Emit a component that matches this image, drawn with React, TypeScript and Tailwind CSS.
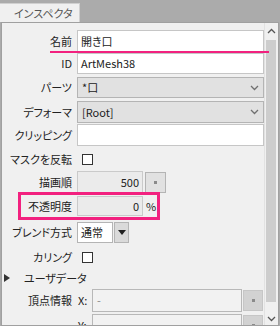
import React from 'react';

const Chevron = ({ up = false, className = '' }: { up?: boolean; className?: string }) => (
  <svg width="9" height="6" viewBox="0 0 9 6" className={className}>
    <polyline
      points={up ? '1,5 4.5,1.5 8,5' : '1,1 4.5,4.5 8,1'}
      fill="none"
      stroke="currentColor"
      strokeWidth="1.3"
    />
  </svg>
);

const Row = ({ className = '', children }: { className?: string; children: React.ReactNode }) => (
  <div className={`flex items-center shrink-0 ${className}`}>{children}</div>
);

const Label = ({ children }: { children: React.ReactNode }) => (
  <div className="w-[70px] shrink-0 text-right whitespace-nowrap">{children}</div>
);

const TextBox = ({ value }: { value: string }) => (
  <div className="ml-[5px] flex-1 h-full flex items-center bg-white border border-[#c6c6c6] pl-[3px]">{value}</div>
);

const Select = ({ value }: { value: string }) => (
  <div className="ml-[5px] flex-1 h-full flex items-center justify-between bg-[#e1e1e1] border border-[#b4b4b4] pl-[4px] pr-[4px]">
    <span>{value}</span>
    <Chevron className="text-[#707070]" />
  </div>
);

const Check = () => <div className="ml-[10px] w-[11px] h-[11px] bg-white border border-[#333]" />;

const DotButton = ({ className = '' }: { className?: string }) => (
  <div className={`flex items-center justify-center ${className}`}>
    <div className="w-[3px] h-[3px] bg-[#8a8a8a]" />
  </div>
);

export default function App() {
  return (
    <div className="relative w-[280px] h-[326px] overflow-hidden bg-[#ababab] font-['Noto_Sans_CJK_JP',sans-serif] text-[11px] leading-none text-[#222] [font-feature-settings:'palt']">
      {/* tab strip */}
      <div className="h-[22px] pt-[3px]">
        <div className="w-[80px] h-[19px] bg-[#f0f0f0] border-t border-r border-[#d0d0d0] pl-[14px] flex items-center text-[11px] text-[#555]">
          インスペクタ
        </div>
      </div>

      {/* inspector panel */}
      <div className="ml-[1px] w-[278px] h-[304px] flex border border-[#a0a0a0] bg-[#f0f0f0]">
        <div className="w-[262px] flex flex-col overflow-hidden">
          <Row className="h-[22px] mt-[7px]">
            <Label>名前</Label>
            <TextBox value="開き口" />
          </Row>
          <Row className="h-[21px] mt-[1px]">
            <Label>ID</Label>
            <TextBox value="ArtMesh38" />
          </Row>
          <Row className="h-[21px] mt-[3px]">
            <Label>パーツ</Label>
            <Select value="*口" />
          </Row>
          <Row className="h-[22px] mt-[3px]">
            <Label>デフォーマ</Label>
            <Select value="[Root]" />
          </Row>
          <Row className="h-[22px] mt-[1px]">
            <Label>クリッピング</Label>
            <TextBox value="" />
          </Row>
          <Row className="h-[20px] mt-[3px]">
            <Label>マスクを反転</Label>
            <Check />
          </Row>
          <Row className="h-[22px] mt-[2px]">
            <Label>描画順</Label>
            <div className="ml-[5px] w-[66px] h-full flex items-center justify-end pr-[3px] bg-[#ebebeb] border border-[#cacaca]">500</div>
            <DotButton className="ml-[2px] w-[21px] h-[21px] bg-[#e1e1e1] border border-[#b4b4b4]" />
          </Row>
          <Row className="h-[20px] mt-[3px]">
            <Label>不透明度</Label>
            <div className="ml-[5px] w-[66px] h-full flex items-center justify-end pr-[3px] bg-[#ebebeb] border border-[#cacaca]">0</div>
            <span className="ml-[3px]">%</span>
          </Row>
          <Row className="h-[21px] mt-[6px]">
            <Label>ブレンド方式</Label>
            <div className="ml-[5px] w-[36px] h-full flex items-center bg-white border border-[#b4b4b4] pl-[3px]">通常</div>
            <div className="ml-[1px] w-[15px] h-full flex items-center justify-center bg-[#dadada] border border-[#b4b4b4]">
              <svg width="8" height="5" viewBox="0 0 8 5">
                <polygon points="0,0 8,0 4,5" fill="#222" />
              </svg>
            </div>
          </Row>
          <Row className="h-[22px] mt-[3px]">
            <Label>カリング</Label>
            <Check />
          </Row>
          <Row className="h-[18px] mt-[1px] pl-[2px]">
            <svg width="6" height="8" viewBox="0 0 6 8">
              <polygon points="0,0 6,4 0,8" fill="#333" />
            </svg>
            <span className="ml-[14px]">ユーザデータ</span>
          </Row>
          <Row className="h-[23px] mt-[2px]">
            <Label>頂点情報</Label>
            <span className="ml-[6px] w-[12px]">X:</span>
            <div className="ml-[2px] w-[150px] h-full flex items-center pl-[4px] bg-[#f2f2f2] border border-[#b8b8b8] text-[#888]">-</div>
            <DotButton className="ml-[1px] w-[20px] h-[21px] bg-[#d2d2d2] border border-[#c6c6c6]" />
          </Row>
          <Row className="h-[23px] mt-[2px]">
            <Label>{''}</Label>
            <span className="ml-[6px] w-[12px]">Y:</span>
            <div className="ml-[2px] w-[150px] h-full bg-[#f2f2f2] border border-[#b8b8b8]" />
            <DotButton className="ml-[1px] w-[20px] h-[21px] bg-[#d2d2d2] border border-[#c6c6c6]" />
          </Row>
        </div>

        {/* scrollbar */}
        <div className="w-[14px] flex flex-col bg-[#f0f0f0] border-l border-[#e2e2e2]">
          <div className="h-[15px] flex items-center justify-center text-[#555]">
            <Chevron up />
          </div>
          <div className="ml-[1px] w-[10px] h-[262px] mt-[2px] bg-[#cdcdcd]" />
          <div className="flex-1 flex items-end justify-center pb-[3px] text-[#555]">
            <Chevron />
          </div>
        </div>
      </div>

      {/* annotations */}
      <div className="absolute left-[50px] top-[51px] w-[219px] h-[2px] bg-[#f2217f]" />
      <div className="absolute left-[18px] top-[192px] w-[142px] h-[28px] border-[3px] border-[#f2217f]" />
    </div>
  );
}
